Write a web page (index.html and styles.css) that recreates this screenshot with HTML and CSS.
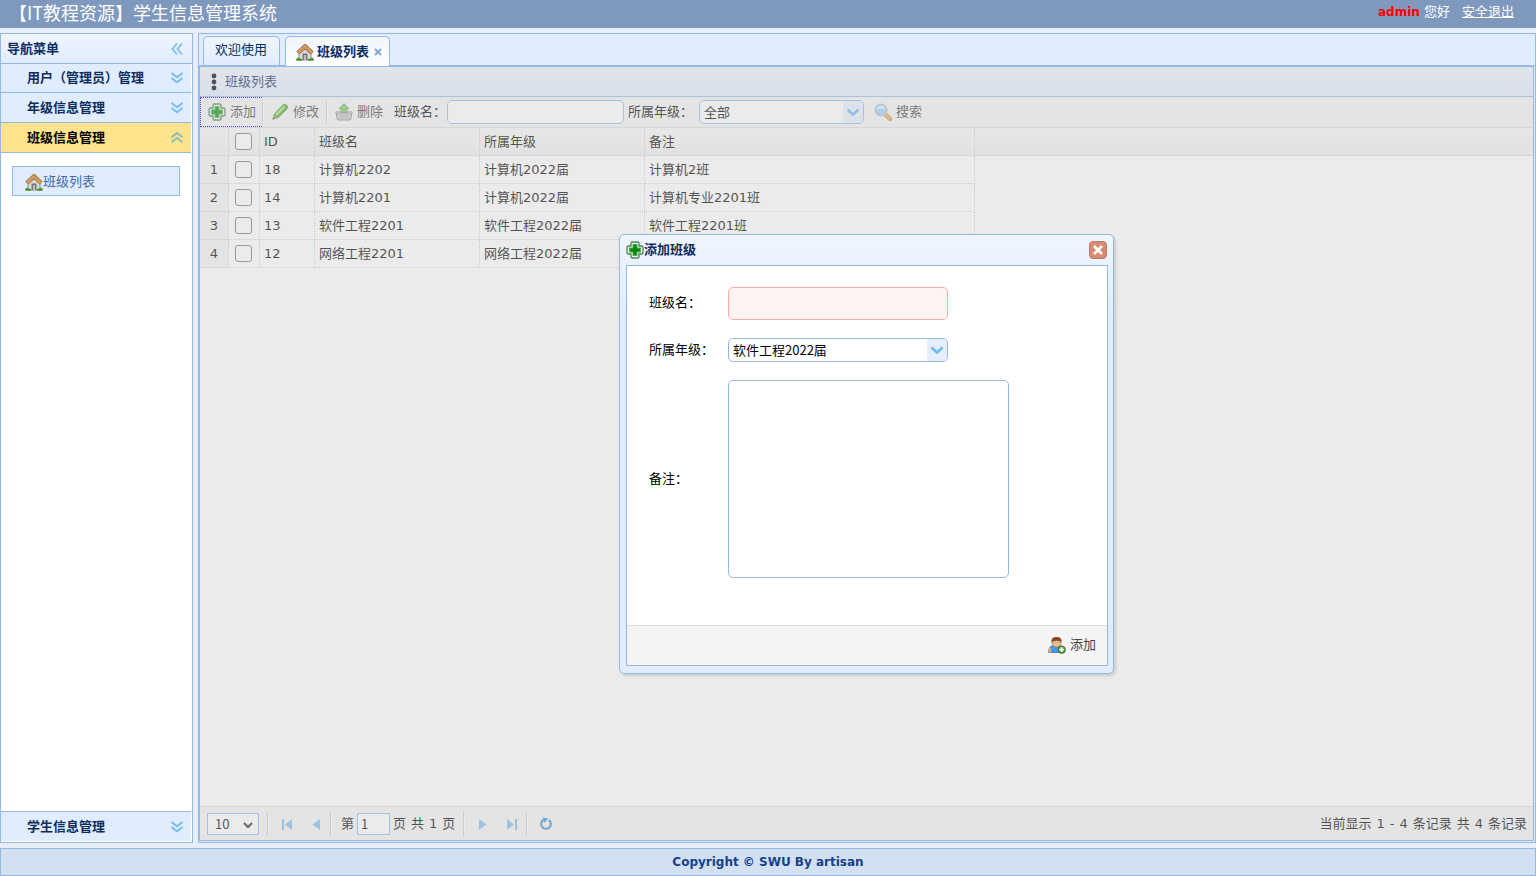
FILE: index.html
```html
<!DOCTYPE html>
<html lang="zh-CN">
<head>
<meta charset="utf-8">
<title>学生信息管理系统</title>
<link rel="stylesheet" href="styles.css">
</head>
<body>
<svg class="sprite" aria-hidden="true">
  <symbol id="house" viewBox="0 0 18 18">
    <path d="M3 8.500 9 4l6 4.500V17H3z" fill="#dcdad6" stroke="#90908c"/>
    <path d="M6.500 10.500h5V17h-5z" fill="#77777a"/><path d="M8 12h2v5H8z" fill="#bbb"/>
    <path d="M1.800 10 9 3.400l7.200 6.600" fill="none" stroke="#8d5c30" stroke-width="4.400" stroke-linejoin="round"/>
    <path d="M2 9.700 9 3.400l7 6.300" fill="none" stroke="#d09a62" stroke-width="3.200" stroke-linejoin="round"/>
    <path d="M0 17.500q0-3 2.500-3 2 0 3 3zM18 17.500q0-3-2.500-3-2 0-3 3z" fill="#5fa53f"/>
    <path d="M1 16.700h5M12 16.700h5" stroke="#47852e" stroke-width="1.600"/>
  </symbol>
  <symbol id="plus" viewBox="0 0 18 18">
    <path d="M6 1h6l1 1v3h3l1 1v6l-1 1h-3v3l-1 1H6l-1-1v-3H2l-1-1V6l1-1h3V2z" fill="#eef8ee" stroke="#4b8450" stroke-width="1.300"/>
    <path d="M6.500 3h5v3.500H15v5h-3.500V15h-5v-3.500H3v-5h3.500z" fill="#58ad55"/>
    <path d="M7.500 4h3v3.500H14v3h-3.500V14h-3v-3.500H4v-3h3.500z" fill="#078a0c"/>
  </symbol>
  <symbol id="pencil" viewBox="0 0 18 18">
    <path d="M2 16 3.500 11 11.500 2.500Q13.500 .5 15.500 2.300T15.800 6L7 14.500z" fill="#4db127" stroke="#348c27"/>
    <path d="M5 12 13.500 3.500" stroke="#a9e778" stroke-width="2.400"/>
    <path d="M1.500 16.500 3 12l3 2.700z" fill="#b09a62"/><path d="m1.300 16.700 1.600-2.400 1 .9z" fill="#333"/>
  </symbol>
  <symbol id="basket" viewBox="0 0 18 18">
    <path d="M1 9h16l-1.500 8h-13z" fill="#dedede" stroke="#888"/>
    <path d="M1 9h16v2H1z" fill="#c4c4c4" stroke="#8c8c8c" stroke-width=".5"/>
    <path d="M3 13h12M3 15h12M5.500 11v5.500M8 11v5.500M10.500 11v5.500M13 11v5.500" stroke="#a9a9a9" stroke-width=".7"/>
    <path d="m9 .5 5 5.500h-2.500v3.500h-5V6H4z" fill="#83c663" stroke="#5b9c48" stroke-width=".8"/>
  </symbol>
  <symbol id="search" viewBox="0 0 18 18">
    <path d="m12 12 4 4" stroke="#ad7d43" stroke-width="4" stroke-linecap="round"/>
    <path d="m12 12 4 4" stroke="#f5ab4d" stroke-width="2.500" stroke-linecap="round"/>
    <circle cx="7" cy="7" r="5.800" fill="#9bd0fb" stroke="#b9bfc9" stroke-width="1.400"/>
    <path d="M3 7a4 4 0 0 1 8-.5Q7 5 3 7" fill="#d9f0ff"/>
  </symbol>
  <symbol id="user" viewBox="0 0 18 18">
    <path d="M.6 16.500Q.5 9.500 6 9.500h5q5.500 0 5.500 7z" fill="#3f9af1" stroke="#3677bd" stroke-width=".8"/>
    <path d="M.6 16.500V13q1.200-2 2.600-1v4.500z" fill="#eaa46c"/>
    <path d="M4 6h9q0 5-4.500 5T4 6" fill="#f0bd8d" stroke="#ad7446" stroke-width=".7"/>
    <path d="M3.500 6.500Q2.500 1 8.500 1t5 5.500Q12.500 4.800 8.500 4.800t-5 1.700" fill="#8b461c"/>
    <circle cx="13.700" cy="13.700" r="3.700" fill="#5b9c38" stroke="#417529"/>
    <path d="M13.700 11.300v4.800M11.300 13.700h4.800" stroke="#fff" stroke-width="1.800"/>
  </symbol>
  <symbol id="down" viewBox="0 0 16 16"><path d="m2.500 3 5.500 4.200L13.500 3M2.500 8l5.500 4.200L13.500 8" fill="none" stroke="#77bdf2" stroke-width="2"/></symbol>
  <symbol id="up" viewBox="0 0 16 16"><path d="M2.500 7.200 8 3l5.500 4.200M2.500 12.200 8 8l5.500 4.200" fill="none" stroke="#8cbcae" stroke-width="2"/></symbol>
  <symbol id="left" viewBox="0 0 16 16"><path d="M8 2.500 3.500 8 8 13.500M13 2.500 8.500 8l4.500 5.500" fill="none" stroke="#7fc0f2" stroke-width="1.900"/></symbol>
  <symbol id="chev" viewBox="0 0 16 16"><path d="m2.500 5.500 5.500 5 5.500-5" fill="none" stroke="#6cb9f2" stroke-width="2.500"/></symbol>
</svg>

<header class="top">
  <h1 class="top-title">【IT教程资源】学生信息管理系统</h1>
  <div class="top-user"><b class="admin">admin</b> <span>您好</span><a class="logout" href="#">安全退出</a></div>
</header>

<main class="layout">
  <nav class="west" aria-label="导航菜单">
    <div class="bar west-head"><span>导航菜单</span><button class="tool" aria-label="折叠"><svg><use href="#left"/></svg></button></div>
    <div class="accordion">
      <button class="acc"><span>用户（管理员）管理</span><svg><use href="#down"/></svg></button>
      <button class="acc"><span>年级信息管理</span><svg><use href="#down"/></svg></button>
      <button class="acc acc-open"><span>班级信息管理</span><svg><use href="#up"/></svg></button>
      <div class="acc-body"><a class="nav-item" href="#"><svg class="icon"><use href="#house"/></svg>班级列表</a></div>
      <button class="acc acc-last"><span>学生信息管理</span><svg><use href="#down"/></svg></button>
    </div>
  </nav>

  <section class="center">
    <div class="tabs">
      <button class="tab">欢迎使用</button>
      <div class="tab tab-on"><svg class="icon"><use href="#house"/></svg><span>班级列表</span><button class="tab-close" aria-label="关闭"><svg viewBox="0 0 8 8"><path d="m1 1 6 6M7 1 1 7" stroke="#88a6cf" stroke-width="2"/></svg></button></div>
    </div>
    <div class="page">
      <div class="bar grid-title"><svg class="dots" viewBox="0 0 6 18"><circle cx="3" cy="3" r="2.400"/><circle cx="3" cy="9" r="2.400"/><circle cx="3" cy="15" r="2.400"/></svg><span>班级列表</span></div>
      <div class="toolbar">
        <button class="btn btn-focus"><svg class="icon"><use href="#plus"/></svg>添加</button><i class="sep"></i>
        <button class="btn"><svg class="icon"><use href="#pencil"/></svg>修改</button><i class="sep"></i>
        <button class="btn"><svg class="icon"><use href="#basket"/></svg>删除</button>
        <label for="q-name">班级名：</label><input class="field q-name" id="q-name" type="text">
        <label for="q-grade">所属年级：</label>
        <span class="combo q-grade"><select id="q-grade"><option>全部</option></select><span class="combo-arrow"><svg><use href="#chev"/></svg></span></span>
        <button class="btn"><svg class="icon"><use href="#search"/></svg>搜索</button>
      </div>
      <div class="grid">
        <table>
          <colgroup><col class="c-num"><col class="c-check"><col class="c-id"><col class="c-name"><col class="c-name"><col class="c-note"><col></colgroup>
          <thead><tr><th></th><th><input type="checkbox" aria-label="全选"></th><th>ID</th><th>班级名</th><th>所属年级</th><th>备注</th><th></th></tr></thead>
          <tbody>
            <tr><td>1</td><td><input type="checkbox" aria-label="选择 18"></td><td>18</td><td>计算机2202</td><td>计算机2022届</td><td>计算机2班</td><td></td></tr>
            <tr><td>2</td><td><input type="checkbox" aria-label="选择 14"></td><td>14</td><td>计算机2201</td><td>计算机2022届</td><td>计算机专业2201班</td><td></td></tr>
            <tr><td>3</td><td><input type="checkbox" aria-label="选择 13"></td><td>13</td><td>软件工程2201</td><td>软件工程2022届</td><td>软件工程2201班</td><td></td></tr>
            <tr><td>4</td><td><input type="checkbox" aria-label="选择 12"></td><td>12</td><td>网络工程2201</td><td>网络工程2022届</td><td></td><td></td></tr>
          </tbody>
        </table>
      </div>
      <div class="pager">
        <span class="size"><select aria-label="每页条数"><option>10</option></select><svg viewBox="0 0 10 8"><path d="m1 2 4 4 4-4" fill="none" stroke="#222" stroke-width="2"/></svg></span>
        <i class="sep"></i>
        <button class="pg" aria-label="首页"><svg viewBox="0 0 16 16"><path d="M4 3v11" stroke="#7fb9e2" stroke-width="2"/><path d="M13 3v11L6 8.500z" fill="#7fc0ec"/></svg></button>
        <button class="pg" aria-label="上一页"><svg viewBox="0 0 16 16"><path d="M12 3v11L4.500 8.500z" fill="#7fc0ec"/></svg></button>
        <i class="sep"></i>
        <label class="page-no">第<input type="text" value="1"></label><span class="page-total"><span>页</span><span>共</span><span>1</span><span>页</span></span>
        <i class="sep sep-wide"></i>
        <button class="pg" aria-label="下一页"><svg viewBox="0 0 16 16"><path d="M4 3v11l7.500-5.500z" fill="#7fc0ec"/></svg></button>
        <button class="pg" aria-label="末页"><svg viewBox="0 0 16 16"><path d="M3 3v11l7-5.500z" fill="#7fc0ec"/><path d="M12 3v11" stroke="#7fb9e2" stroke-width="2"/></svg></button>
        <i class="sep"></i>
        <button class="pg" aria-label="刷新"><svg viewBox="0 0 16 16"><path d="M5 4.200a4.800 4.800 0 1 0 6 0" fill="none" stroke="#3d92d0" stroke-width="2.200"/><path d="m4.500 1.500 6 1-4.500 4.500z" fill="#3d92d0"/></svg></button>
        <span class="summary"><span>当前显示</span><span>1</span><span>-</span><span>4</span><span>条记录</span><span>共</span><span>4</span><span>条记录</span></span>
      </div>

      <div class="mask">
        <form class="dialog" role="dialog" aria-labelledby="dialog-title">
          <div class="dialog-head"><svg class="icon"><use href="#plus"/></svg><span id="dialog-title">添加班级</span><button class="close" type="button" aria-label="关闭"><svg viewBox="0 0 10 10"><path d="m1 1 8 8M9 1 1 9" stroke="#fff" stroke-width="2.600"/></svg></button></div>
          <div class="dialog-body">
            <div class="form">
              <label for="f-name">班级名：</label><input class="field f-name" id="f-name" type="text" required>
              <label for="f-grade">所属年级：</label><span class="combo f-grade"><select id="f-grade"><option>软件工程2022届</option></select><span class="combo-arrow"><svg><use href="#chev"/></svg></span></span>
              <label for="f-note">备注：</label><textarea class="field f-note" id="f-note"></textarea>
            </div>
            <div class="dialog-foot"><button class="btn" type="button"><svg class="icon"><use href="#user"/></svg>添加</button></div>
          </div>
        </form>
      </div>
    </div>
  </section>
</main>

<footer class="south">Copyright © SWU By artisan</footer>
</body>
</html>
```
FILE: styles.css
```css
* { box-sizing: border-box; }

body {
  margin: 0;
  min-height: 100vh;
  display: flex;
  flex-direction: column;
  background: #e6eef8;
  font: 13px/20px "DejaVu Sans", "Noto Sans CJK SC", sans-serif;
  color: #000;
}

button, input, select, textarea { font: inherit; color: inherit; margin: 0; }
button { border: 0; padding: 0; background: none; cursor: pointer; }
svg { display: block; flex: none; }
.sprite { position: absolute; width: 0; height: 0; }
.icon { width: 18px; height: 18px; }

/* Top banner */
.top {
  height: 28px;
  padding: 0 22px 4px 9px;
  display: flex;
  align-items: center;
  justify-content: space-between;
  background: #7f99be;
  color: #fff;
}
.top-title { margin: 0; font: 18px/24px "Noto Sans CJK SC", sans-serif; }
.admin { color: #f00; font-size: 12px; }
.logout { margin-left: 12px; color: #fff; }

/* Frame */
.layout { flex: 1; display: flex; gap: 5px; padding: 5px 0; }
.bar {
  height: 30px;
  display: flex;
  align-items: center;
  background: linear-gradient(#eff5ff, #e0ecff);
  border-bottom: 1px solid #95b8e7;
  color: #0e2d5f;
  font-weight: bold;
}

/* Navigation */
.west {
  width: 193px;
  flex: none;
  display: flex;
  flex-direction: column;
  background: #fff;
  border: 1px solid #95b8e7;
}
.west-head { justify-content: space-between; padding: 0 7px 0 6px; }
.tool svg, .acc svg { width: 16px; height: 16px; }
.accordion { flex: 1; display: flex; flex-direction: column; padding: 0 1px 1px 0; }
.acc {
  height: 30px;
  padding: 0 6px 0 26px;
  display: flex;
  align-items: center;
  justify-content: space-between;
  background: #e0ecff;
  border-bottom: 1px solid #95b8e7;
  color: #0e2d5f;
  font-weight: bold;
}
.acc:first-child { height: 29px; }
.acc-open { background: #ffe48d; color: #000; }
.acc-last { border-top: 1px solid #95b8e7; border-bottom: 0; }
.acc-body { flex: 1; padding: 13px 11px; }
.nav-item {
  height: 30px;
  padding: 2px 0 0 12px;
  display: flex;
  align-items: center;
  background: #e0ecff;
  border: 1px solid #95b8e7;
  color: #416aa3;
  text-decoration: none;
}

/* Tabs */
.center {
  flex: 1;
  min-width: 0;
  display: flex;
  flex-direction: column;
  background: #e0ecff;
  border: 1px solid #95b8e7;
}
.tabs {
  height: 32px;
  padding: 2px 4px 0;
  display: flex;
  gap: 5px;
  border-bottom: 1px solid #95b8e7;
}
.tab {
  height: 29px;
  padding: 0 12px 2px 11px;
  display: flex;
  align-items: center;
  background: linear-gradient(#eff5ff, #e0ecff);
  border: 1px solid #95b8e7;
  border-bottom: 0;
  border-radius: 5px 5px 0 0;
  color: #0e2d5f;
}
.tab-on {
  height: 30px;
  padding: 0 7px 0 10px;
  background: linear-gradient(#eff5ff, #fff);
  font-weight: bold;
}
.tab-on .icon { margin-right: 3px; }
.tab-close { margin-left: 5px; }
.tab-close svg { width: 8px; height: 8px; }

/* Class list page */
.page {
  position: relative;
  flex: 1;
  margin: 0 1px 1px 0;
  display: flex;
  flex-direction: column;
  background: #fff;
  border: 1px solid #95b8e7;
}
.grid-title { padding-left: 11px; gap: 8px; font-weight: normal; }
.dots { width: 6px; height: 18px; }
.toolbar {
  height: 31px;
  display: flex;
  align-items: center;
  background: #f4f4f4;
  border-bottom: 1px solid #ddd;
}
.toolbar label { flex: none; margin: 0 1px 0 4px; }
.btn {
  height: 30px;
  padding: 0 7px;
  display: flex;
  align-items: center;
  gap: 4px;
  color: #444;
  flex: none;
}
.toolbar .btn { padding: 0 7px; }
.btn-focus { border: 1px dotted #0000c5; border-width: 1px 0 1px 1px; }
.toolbar .btn-focus { padding-right: 6px; }
.sep { width: 2px; height: 24px; flex: none; background: #ccc; border-right: 1px solid #fff; }
.field {
  padding: 0 4px;
  background: #fff;
  border: 1px solid #95b8e7;
  border-radius: 5px;
  outline: 0;
}
.q-name { width: 177px; height: 24px; }
.combo { position: relative; display: block; height: 24px; }
.combo select {
  width: 100%;
  height: 100%;
  padding: 0 24px 0 4px;
  appearance: none;
  background: #fff;
  border: 1px solid #95b8e7;
  border-radius: 5px;
  font-family: "Noto Sans CJK SC", sans-serif;
}
.combo-arrow {
  position: absolute;
  inset: 1px 1px 1px auto;
  width: 20px;
  padding: 3px 2px;
  background: #e6eefd;
  border-radius: 0 4px 4px 0;
  pointer-events: none;
}
.combo-arrow svg { width: 16px; height: 16px; }
.q-grade { width: 165px; margin: 0 3px 0 5px; }

/* Data table */
.grid { flex: 1; }
table { width: 100%; table-layout: fixed; border-spacing: 0; }
.c-num { width: 29px; }
.c-check { width: 31px; }
.c-id { width: 55px; }
.c-name { width: 165px; }
.c-note { width: 330px; }
th, td {
  height: 28px;
  padding: 0 4px;
  text-align: left;
  font-weight: normal;
  border: 0 dotted #ccc;
  border-width: 0 1px 1px 0;
}
th { background: linear-gradient(#f9f9f9, #efefef); border-bottom: 1px solid #ddd; }
tr > :last-child { border-right: 0; }
td:last-child { border-bottom: 0; }
td:first-child { background: #f4f4f4; text-align: center; }
td:nth-child(2), th:nth-child(2) { padding: 0 0 0 6px; }
td input, th input {
  display: block;
  width: 17px;
  height: 17px;
  appearance: none;
  background: #fff;
  border: 1px solid #767676;
  border-radius: 3px;
}

/* Pagination */
.pager {
  height: 34px;
  padding: 0 6px 0 7px;
  display: flex;
  align-items: center;
  background: #f4f4f4;
  border-top: 1px solid #ddd;
}
.size { position: relative; width: 52px; margin-right: 8px; }
.size select {
  width: 52px;
  height: 22px;
  display: block;
  padding: 0 7px;
  appearance: none;
  background: #fff;
  border: 1px solid #95b8e7;
  font-family: "Noto Sans CJK SC", sans-serif;
}
.size svg { position: absolute; right: 6px; top: 8px; width: 10px; height: 8px; }
.pg { width: 29px; height: 24px; display: grid; place-items: center; }
.sep + .pg { margin-left: 3px; }
.pg svg { width: 16px; height: 16px; }
.page-no { display: flex; align-items: center; gap: 3px; margin: 0 3px 0 9px; }
.page-no input {
  width: 33px;
  height: 22px;
  padding: 0 3px;
  background: #fff;
  border: 1px solid #95b8e7;
  font-family: "Noto Sans CJK SC", sans-serif;
}
.page-total { display: flex; gap: 5px; }
.sep-wide { margin-left: 8px; }
.summary { display: flex; gap: 5px; margin-left: auto; }

/* Modal window */
.mask {
  position: absolute;
  inset: 0;
  display: flex;
  align-items: center;
  justify-content: center;
  background: rgba(204, 204, 204, 0.4);
}
.dialog {
  width: 495px;
  padding: 0 5px 7px 6px;
  background: linear-gradient(#eff5ff, #e0ecff 20%);
  border: 1px solid #95b8e7;
  border-radius: 5px;
  box-shadow: 2px 2px 3px #ccc;
}
.dialog-head {
  height: 30px;
  padding-right: 1px;
  display: flex;
  align-items: center;
  color: #0e2d5f;
  font-weight: bold;
}
.close {
  width: 18px;
  height: 18px;
  margin-left: auto;
  display: grid;
  place-items: center;
  background: #d98b72;
  border: 1px solid #b9796a;
  border-radius: 4px;
}
.close svg { width: 10px; height: 10px; }
.dialog-body { background: #fff; border: 1px solid #95b8e7; }
.form {
  display: grid;
  grid-template-columns: 79px auto;
  justify-content: start;
  align-items: center;
  row-gap: 18px;
  padding: 21px 22px 47px;
}
.f-name { width: 220px; height: 33px; background: #fff3f3; border-color: #ffa8a8; }
.f-grade { width: 220px; }
.f-note { width: 281px; height: 198px; resize: none; }
.dialog-foot {
  height: 40px;
  padding: 0 4px;
  display: flex;
  align-items: center;
  justify-content: flex-end;
  background: #f4f4f4;
  border-top: 1px solid #ddd;
}

.south {
  height: 28px;
  display: grid;
  place-items: center;
  background: #d2e0f2;
  border: 1px solid #95b8e7;
  color: #15428b;
  font-size: 12px;
  font-weight: bold;
}
```
